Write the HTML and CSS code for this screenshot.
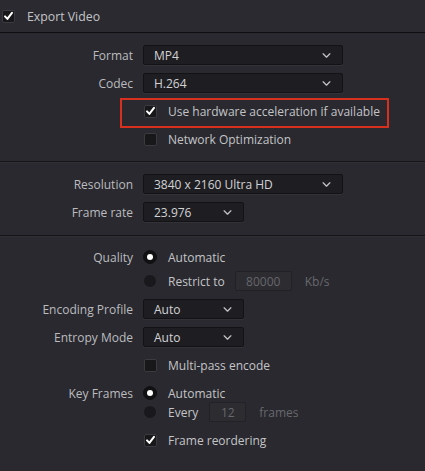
FILE: index.html
```html
<!DOCTYPE html>
<html>
<head>
<meta charset="utf-8">
<link rel="stylesheet" href="styles.css">
</head>
<body>
<div class="panel">
  <div class="header">
    <span class="check on"><svg viewBox="0 0 12 12"><path d="M2.2 6.4 L4.8 9.2 L9.8 2.6" /></svg></span>
    <span class="header-title">Export Video</span>
  </div>

  <div class="section s1">
    <div class="row">
      <div class="label">Format</div>
      <div class="select wide"><span>MP4</span><svg class="chev" viewBox="0 0 10 6"><path d="M1 1 L5 5 L9 1"/></svg></div>
    </div>
    <div class="row">
      <div class="label">Codec</div>
      <div class="select wide"><span>H.264</span><svg class="chev" viewBox="0 0 10 6"><path d="M1 1 L5 5 L9 1"/></svg></div>
    </div>
    <div class="row">
      <div class="label"></div>
      <div class="opt highlight">
        <span class="check on"><svg viewBox="0 0 12 12"><path d="M2.2 6.4 L4.8 9.2 L9.8 2.6" /></svg></span>
        <span class="opt-text">Use hardware acceleration if available</span>
      </div>
    </div>
    <div class="row">
      <div class="label"></div>
      <div class="opt">
        <span class="check"></span>
        <span class="opt-text">Network Optimization</span>
      </div>
    </div>
  </div>

  <div class="section s2">
    <div class="row">
      <div class="label">Resolution</div>
      <div class="select wide"><span>3840 x 2160 Ultra HD</span><svg class="chev" viewBox="0 0 10 6"><path d="M1 1 L5 5 L9 1"/></svg></div>
    </div>
    <div class="row">
      <div class="label">Frame rate</div>
      <div class="select narrow"><span>23.976</span><svg class="chev" viewBox="0 0 10 6"><path d="M1 1 L5 5 L9 1"/></svg></div>
    </div>
  </div>

  <div class="section s3">
    <div class="row r-quality">
      <div class="label">Quality</div>
      <div class="opt"><span class="radio on"></span><span class="opt-text">Automatic</span></div>
    </div>
    <div class="row r-restrict">
      <div class="label"></div>
      <div class="opt">
        <span class="radio"></span><span class="opt-text">Restrict to</span>
        <span class="field f-rate">80000</span><span class="unit">Kb/s</span>
      </div>
    </div>
    <div class="row r-enc">
      <div class="label">Encoding Profile</div>
      <div class="select narrow"><span>Auto</span><svg class="chev" viewBox="0 0 10 6"><path d="M1 1 L5 5 L9 1"/></svg></div>
    </div>
    <div class="row">
      <div class="label">Entropy Mode</div>
      <div class="select narrow"><span>Auto</span><svg class="chev" viewBox="0 0 10 6"><path d="M1 1 L5 5 L9 1"/></svg></div>
    </div>
    <div class="row">
      <div class="label"></div>
      <div class="opt"><span class="check"></span><span class="opt-text">Multi-pass encode</span></div>
    </div>
    <div class="row r-key">
      <div class="label">Key Frames</div>
      <div class="opt"><span class="radio on"></span><span class="opt-text">Automatic</span></div>
    </div>
    <div class="row r-every">
      <div class="label"></div>
      <div class="opt">
        <span class="radio"></span><span class="opt-text">Every</span>
        <span class="field f-frames">12</span><span class="unit">frames</span>
      </div>
    </div>
    <div class="row">
      <div class="label"></div>
      <div class="opt">
        <span class="check on"><svg viewBox="0 0 12 12"><path d="M2.2 6.4 L4.8 9.2 L9.8 2.6" /></svg></span>
        <span class="opt-text">Frame reordering</span>
      </div>
    </div>
  </div>
</div>
</body>
</html>
```

FILE: styles.css
```css
html, body {
  margin: 0;
  padding: 0;
  background: #29292f;
}
body {
  width: 425px;
  height: 471px;
  overflow: hidden;
  font-family: "Open Sans", "Noto Sans", sans-serif;
  font-size: 12px;
  color: #bdbdc0;
}
.panel {
  display: flex;
  flex-direction: column;
}
.header {
  display: flex;
  align-items: center;
  padding-left: 2px;
  gap: 12px;
  background: #2a2a30;
  border-bottom: 1px solid #0e0e10;
  box-sizing: border-box;
  height: 33px;
}
.header-title {
  color: #c4c4c7;
  font-size: 12.3px;
}
.section {
  display: flex;
  flex-direction: column;
  gap: 8px;
  border-bottom: 1px solid #151518;
  box-shadow: 0 1px 0 #303036;
}
.s1 {
  padding: 12px 0 12px;
  height: 129px;
  box-sizing: border-box;
}
.s2 {
  padding: 11px 0 12px;
  height: 73px;
  box-sizing: border-box;
  margin-top: 1px;
}
.s3 {
  padding: 10px 0 0;
  border-bottom: none;
  box-shadow: none;
  margin-top: 1px;
}
.row {
  height: 20px;
  display: flex;
  align-items: center;
  gap: 10px;
}
.label {
  width: 133px;
  flex: none;
  text-align: right;
  color: #bcbcbf;
  white-space: nowrap;
}
.s3 .r-restrict { margin-top: -4px; }
.s3 .r-every { margin-top: -9px; }

.select {
  height: 20px;
  box-sizing: border-box;
  background: #1e1e22;
  border: 1px solid #131316;
  border-radius: 2px;
  display: flex;
  align-items: center;
  justify-content: space-between;
  padding: 0 11px 0 10px;
  color: #d2d2d5;
  box-shadow: 0 1px 0 #323238;
}
.select.wide { width: 200px; }
.select.narrow { width: 101px; }
.chev {
  width: 9px;
  height: 5px;
  fill: none;
  stroke: #bfbfc2;
  stroke-width: 1.6;
  stroke-linecap: round;
  stroke-linejoin: round;
}

.opt {
  display: flex;
  align-items: center;
  margin-left: 1px;
  position: relative;
  height: 20px;
}
.opt-text {
  margin-left: 11px;
  color: #c4c4c7;
  white-space: nowrap;
}
.highlight::after {
  content: "";
  position: absolute;
  left: -24px;
  top: -3px;
  width: 269px;
  height: 30px;
  box-sizing: border-box;
  border: 2px solid #d8301e;
  pointer-events: none;
}

.check {
  width: 13px;
  height: 13px;
  box-sizing: border-box;
  background: #18181b;
  border: 1px solid #3a3a3f;
  border-radius: 2px;
  display: inline-flex;
  align-items: center;
  justify-content: center;
  flex: none;
}
.check svg {
  width: 12px;
  height: 12px;
  fill: none;
  stroke: #ffffff;
  stroke-width: 2.2;
  stroke-linecap: round;
  stroke-linejoin: round;
}

.radio {
  width: 14px;
  height: 14px;
  border-radius: 50%;
  box-sizing: border-box;
  background: #19191d;
  border: 1px solid #2c2c31;
  display: inline-flex;
  align-items: center;
  justify-content: center;
  flex: none;
  margin-left: -1px;
}
.radio.on {
  background: #111113;
  border-color: #111113;
}
.radio.on::after {
  content: "";
  width: 6px;
  height: 6px;
  border-radius: 50%;
  background: #ffffff;
}

.field {
  height: 20px;
  box-sizing: border-box;
  background: #2c2c31;
  border: 1px solid #222226;
  color: #67676c;
  display: inline-flex;
  align-items: center;
  justify-content: center;
  border-radius: 2px;
}
.f-rate { width: 57px; margin-left: 10px; }
.f-frames { width: 37px; margin-left: 11px; }
.unit {
  color: #68686d;
  margin-left: 13px;
}
```
